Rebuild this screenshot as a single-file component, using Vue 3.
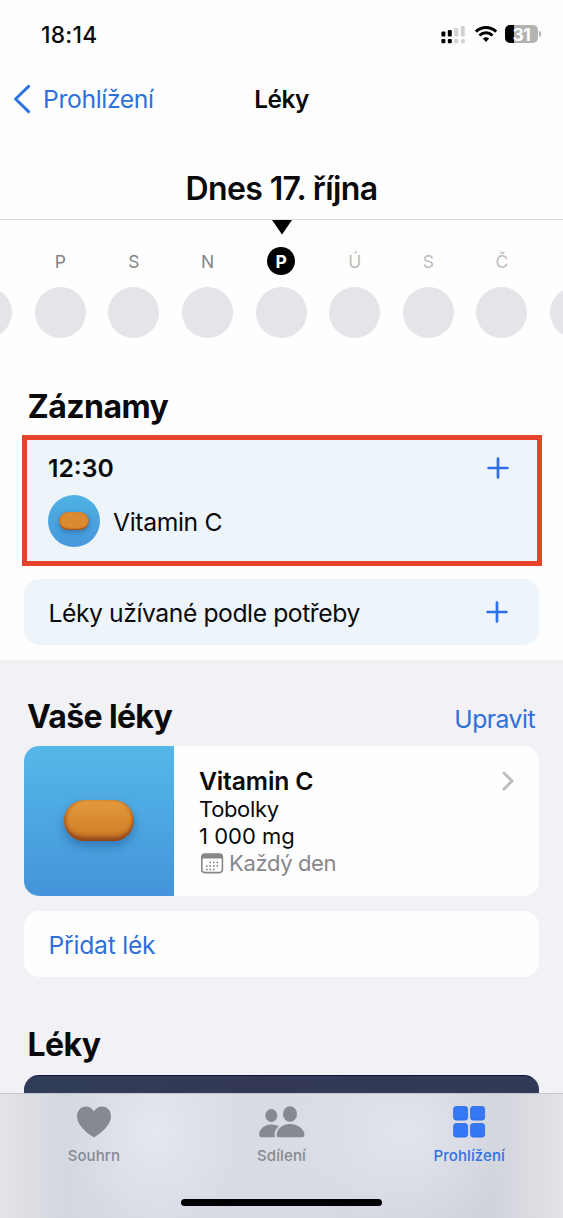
<script setup>
const days = [
  { label: '', state: 'past' },
  { label: 'P', state: 'past' },
  { label: 'S', state: 'past' },
  { label: 'N', state: 'past' },
  { label: 'P', state: 'today' },
  { label: 'Ú', state: 'future' },
  { label: 'S', state: 'future' },
  { label: 'Č', state: 'future' },
  { label: '', state: 'future' },
]
const dots = [[9.5, 9.5], [13, 9.5], [16.5, 9.5], [6, 13], [9.5, 13], [13, 13], [16.5, 13], [6, 16.5], [9.5, 16.5], [13, 16.5]]
</script>

<template>
  <div class="screen">
    <header class="status">
      <span class="clock">18:14</span>
      <div class="status-icons">
        <svg class="signal" width="24" height="18" viewBox="0 0 24 18">
          <g fill="#000">
            <rect x="0.4" y="5.6" width="4" height="5" rx="1" /><rect x="6.8" y="4" width="4" height="6.6" rx="1" />
            <rect x="0.4" y="13" width="4" height="4.2" rx="1" /><rect x="6.8" y="13" width="4" height="4.2" rx="1" />
          </g>
          <g fill="#d2d2d2">
            <rect x="13.2" y="2" width="4" height="8.6" rx="1" /><rect x="19.8" y="0" width="4" height="10.6" rx="1" />
            <rect x="13.2" y="13" width="4" height="4.2" rx="1" /><rect x="19.8" y="13" width="4" height="4.2" rx="1" />
          </g>
        </svg>
        <svg class="wifi" width="22" height="16" viewBox="0 0 22 16">
          <g fill="none" stroke="#000" stroke-width="3">
            <path d="M0.9 5.6A14.5 14.5 0 0 1 21.1 5.6" />
            <path d="M4.5 9.5A9.3 9.3 0 0 1 17.5 9.500" />
          </g>
          <path d="M7.8 12.6a4.8 4.8 0 0 1 6.4 0L11 16z" fill="#000" />
        </svg>
        <div class="battery"><span>31</span></div>
        <i class="battery-cap"></i>
      </div>
    </header>

    <nav class="nav">
      <a class="back">
        <svg width="18" height="30" viewBox="0 0 18 30"><path d="M16.6 2.4L3.600 15l13 12.6" fill="none" stroke="#2f72e4" stroke-width="3" stroke-linecap="round" stroke-linejoin="round" /></svg>
        <span>Prohlížení</span>
      </a>
      <h1>Léky</h1>
    </nav>

    <div class="date"><span>Dnes 17. října</span></div>

    <div class="week">
      <svg class="pointer" width="20" height="15" viewBox="0 0 20 15"><path d="M0 0H20L10 14.500z" /></svg>
      <div class="days">
        <div v-for="(d, i) in days" :key="i" class="day" :class="d.state">
          <span class="letter">{{ d.label }}</span>
          <i class="ring"></i>
        </div>
      </div>
    </div>

    <section class="log">
      <h2>Záznamy</h2>
      <div class="entry">
        <div class="entry-head">
          <span class="time">12:30</span>
          <svg width="22" height="22" viewBox="0 0 22 22"><path d="M11 1.6V20.4M1.6 11H20.4" stroke="#2f6fe6" stroke-width="2.7" stroke-linecap="round" /></svg>
        </div>
        <div class="entry-med">
          <div class="avatar"><i class="pill small"></i></div>
          <span>Vitamin C</span>
        </div>
      </div>
      <div class="as-needed">
        <span>Léky užívané podle potřeby</span>
        <svg width="22" height="22" viewBox="0 0 22 22"><path d="M11 1.6V20.4M1.6 11H20.4" stroke="#2f6fe6" stroke-width="2.7" stroke-linecap="round" /></svg>
      </div>
    </section>

    <section class="meds">
      <div class="meds-head">
        <h2>Vaše léky</h2>
        <a>Upravit</a>
      </div>
      <div class="med-card">
        <div class="art"><i class="pill"></i></div>
        <div class="info">
          <strong>Vitamin C</strong>
          <span class="form">Tobolky</span>
          <span class="dose">1 000 mg</span>
          <div class="schedule">
            <svg width="23" height="21" viewBox="0 0 23 21">
              <rect x="0.800" y="1" width="20.6" height="18.6" rx="3" fill="none" stroke="#87878b" stroke-width="1.6" />
              <path d="M0.800 5.500V4a3 3 0 0 1 3-3h14.600a3 3 0 0 1 3 3V5.500z" fill="#87878b" />
              <rect v-for="(p, i) in dots" :key="i" :x="p[0] - 1" :y="p[1] - 0.8" width="1.6" height="1.6" rx="0.4" fill="#77777b" />
            </svg>
            <span>Každý den</span>
          </div>
        </div>
        <svg class="chevron" width="12" height="20" viewBox="0 0 12 20"><path d="M2 2l8 8-8 8" fill="none" stroke="#bdbdc0" stroke-width="3" stroke-linecap="round" stroke-linejoin="round" /></svg>
      </div>
      <div class="add"><a>Přidat lék</a></div>
      <h2 class="more">Léky</h2>
      <div class="article"></div>
    </section>

    <footer class="tabs">
      <div class="tab-row">
        <div class="tab summary">
          <svg width="36" height="34" viewBox="0 0 36 34"><path d="M18 32.500C15.500 31 1 22 1 11.300C1 5.300 5 1.400 10 1.400C13.600 1.400 16.500 3.400 18 6.500C19.500 3.400 22.400 1.400 26 1.400C31 1.400 35 5.300 35 11.300C35 22 20.500 31 18 32.500z" fill="#858992" /></svg>
          <span>Souhrn</span>
        </div>
        <div class="tab sharing">
          <svg width="48" height="34" viewBox="0 0 48 34">
            <g fill="#858992">
              <ellipse cx="13.300" cy="10.500" rx="6" ry="6.500" />
              <path d="M1.200 29.500C1.200 24 6.200 19.500 13.500 19.500C16.500 19.500 18.700 20.200 20.600 21.400C18 23.600 16.600 26.500 16.600 29.500Q16.600 31.200 17.200 32.300H3.400Q1.200 32.300 1.200 29.500z" />
              <ellipse cx="32" cy="9" rx="7" ry="7.700" />
              <path d="M18.500 30C18.500 24.500 24 19 32 19C40 19 46.500 24.500 46.500 30Q46.500 32.300 44 32.300H21Q18.500 32.300 18.500 30z" />
            </g>
          </svg>
          <span>Sdílení</span>
        </div>
        <div class="tab browse">
          <svg width="34" height="34" viewBox="0 0 34 34">
            <g fill="#3478f6" stroke="#2968dd" stroke-width="0.8">
              <rect x="1.600" y="1.500" width="14" height="13.600" rx="2.600" /><rect x="18.600" y="1.500" width="14" height="13.600" rx="2.600" />
              <rect x="1.600" y="18.500" width="14" height="13.600" rx="2.600" /><rect x="18.600" y="18.500" width="14" height="13.600" rx="2.600" />
            </g>
          </svg>
          <span>Prohlížení</span>
        </div>
      </div>
      <i class="home"></i>
    </footer>
  </div>
</template>

<style>
body { margin: 0; }
</style>

<style scoped>
.screen {
  width: 563px; height: 1218px; overflow: hidden;
  display: flex; flex-direction: column;
  background: #fefefe; color: #0a0a0c;
  font-family: Inter, "Noto Sans", sans-serif; font-size: 24.7px;
}
.screen * { box-sizing: border-box; }
svg { display: block; flex: none; overflow: visible; }
span, a, strong, h1, h2 { white-space: nowrap; }
h1, h2 { margin: 0; }
a { color: #2f70dc; }
h2 { font-size: 32px; line-height: 40px; font-weight: 700; letter-spacing: -0.55px; }

.status { height: 68px; flex: none; display: flex; justify-content: space-between; padding: 20px 22px 0 41px; }
.clock { font-size: 22.800px; line-height: 29px; font-weight: 500; letter-spacing: 0.250px; }
.status-icons { display: flex; padding-top: 5px; }
.signal { margin: 1px 10px 0 0; }
.wifi { margin: 1px 8px 0 0; }
.battery { width: 33px; height: 18px; border-radius: 5px; background: linear-gradient(90deg, #000 9.500px, #b3b3b3 9.500px); text-align: center; }
.battery span { display: block; font-size: 17.500px; line-height: 19px; font-weight: 700; color: #fff; letter-spacing: -0.3px; }
.battery-cap { width: 2px; height: 6px; margin: 6px 0 0 1px; border-radius: 0 2px 2px 0; background: #b3b3b3; }

.nav { height: 62px; flex: none; display: grid; grid-template-columns: 1fr auto 1fr; align-items: center; padding-left: 12px; padding-right: 12px; }
.back { display: flex; align-items: center; gap: 13px; letter-spacing: -0.350px; }
.nav h1 { font-size: 24.400px; line-height: 32px; font-weight: 600; letter-spacing: -0.5px; }

.date { height: 90px; flex: none; border-bottom: 1px solid #dcdcde; text-align: center; padding-top: 39px; }
.date span { font-size: 32px; line-height: 40px; font-weight: 600; letter-spacing: -0.600px; display: inline-block; }

.week { height: 160px; flex: none; overflow: hidden; display: flex; flex-direction: column; }
.pointer { margin-left: 272px; }
.days { display: grid; grid-template-columns: repeat(9, 73.600px); margin: 12px 0 0 -50px; width: 663px; }
.day { display: flex; flex-direction: column; align-items: center; }
.letter { width: 28px; height: 28px; line-height: 29px; border-radius: 50%; text-align: center; font-size: 17.500px; color: #838386; }
.future .letter { color: #bcbcbf; }
.today .letter { background: #000; color: #fff; font-weight: 700; }
.ring { width: 51px; height: 51px; margin-top: 12px; border-radius: 50%; background: #e4e4e9; }

.log { height: 280px; flex: none; }
.log h2 { margin: 7px 0 8px 27.500px; }
.entry { width: 520px; height: 131px; margin-left: 22px; border: 5px solid #e6432b; background: #edf5fb; padding: 16px 28px 0 21px; }
.entry-head { display: flex; justify-content: space-between; align-items: center; height: 24px; }
.time { font-weight: 600; }
.entry-med { display: flex; align-items: center; gap: 13px; margin-top: 15px; letter-spacing: -0.350px; }
.entry-med span { padding-top: 1px; }
.avatar { width: 52px; height: 52px; border-radius: 50%; background: linear-gradient(#4fb2e4, #4597dc); display: flex; align-items: center; justify-content: center; }
.pill { width: 70px; height: 41px; border-radius: 20.500px; background: linear-gradient(#e39a3c, #d4832b 75%, #b8641f); box-shadow: inset 0 -4px 4px -1px #8d421b, inset 3px 0 4px -2px #a9611f, inset -3px 0 4px -2px #a9611f, 0 5px 10px rgba(25, 70, 130, 0.45); }
.art .pill { margin-bottom: 2px; }
.pill.small { width: 30px; height: 18px; border-radius: 9px; background: #da8b30; box-shadow: inset 0 -2px 2px -1px #8d421b, inset 1px 0 2px -1px #a9611f, inset -1px 0 2px -1px #a9611f, 0 2px 5px rgba(25, 70, 130, 0.45); }
.as-needed { width: 515px; height: 66px; margin: 13px 0 0 24px; border-radius: 15px; background: #edf5fb; display: flex; align-items: center; justify-content: space-between; padding: 0 31px 0 24.500px; letter-spacing: -0.430px; }
.as-needed span { padding-top: 1px; }

.meds { height: 433px; flex: none; background: #f1f1f6; padding: 37px 24px 0; overflow: hidden; }
.meds-head { display: flex; justify-content: space-between; align-items: baseline; padding: 0 4px 0 3px; height: 49px; }
.meds-head h2 { letter-spacing: -0.650px; }
.meds-head a { letter-spacing: -0.500px; }
.med-card { height: 150px; border-radius: 15px; overflow: hidden; background: #fefefe; display: flex; }
.art { width: 150px; background: linear-gradient(#55b8e7, #4494db); display: flex; align-items: center; justify-content: center; }
.info { flex: 1; padding: 20px 0 0 25px; display: flex; flex-direction: column; }
.info strong { font-weight: 600; line-height: 30px; letter-spacing: -0.150px; }
.info span { font-size: 22px; line-height: 27px; letter-spacing: -0.350px; }
.info .dose { letter-spacing: 0; }
.schedule { display: flex; align-items: center; gap: 5px; padding-left: 2px; }
.schedule span { color: #87878b; }
.chevron { margin: 25px 25px 0 0; }
.add { height: 66px; margin-top: 15px; border-radius: 15px; background: #fefefe; display: flex; align-items: center; padding: 1px 0 0 24.500px; letter-spacing: -0.250px; }
.more { margin: 48px 0 10px 3.500px; }
.article { height: 30px; border-radius: 15px 15px 0 0; border-top: 1px solid #0f1538; background: linear-gradient(90deg, #303d58, #333857 45%, #303a57); }

.tabs {
  height: 125px; flex: none; border-top: 1px solid #c6c6cf;
  display: flex; flex-direction: column; justify-content: space-between; align-items: center; padding: 11px 0 12px;
  background:
    radial-gradient(ellipse 90px 110px at 155px 38px, #e3e8f1, rgba(227, 232, 241, 0)),
    radial-gradient(ellipse 110px 100px at 405px 38px, #e1e5ee, rgba(225, 229, 238, 0)),
    linear-gradient(90deg, #e4e4e8 0, #d5d8df 60px, #d9dce4 300px, #d1d3db 490px, #e3e3e7 563px);
}
.tab-row { display: flex; width: 563px; }
.tab { flex: 1; display: flex; flex-direction: column; align-items: center; color: #858992; }
.tab span { font-size: 15px; line-height: 20px; margin-top: 7px; font-weight: 500; letter-spacing: 0.100px; }
.tab.browse { color: #2f70e4; }
.home { width: 201px; height: 7px; border-radius: 4px; background: #000; }
</style>
